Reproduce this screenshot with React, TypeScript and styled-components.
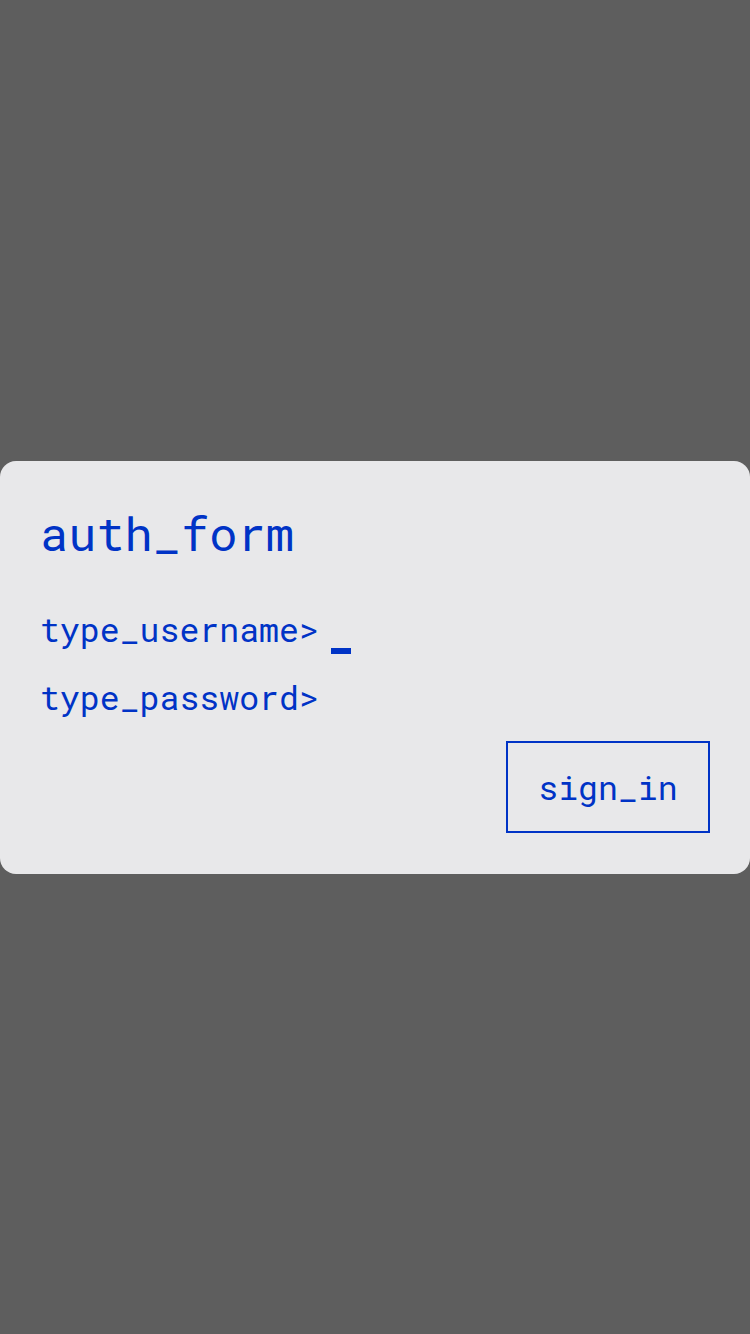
import React from "react"
import styled, { createGlobalStyle } from "styled-components"

const Blue = "#0033c6"

const GlobalStyle = createGlobalStyle`
  html, body {
    margin: 0;
    padding: 0;
    background: #5e5e5e;
  }
  body {
    font-family: "Roboto Mono", "DejaVu Sans Mono", "Liberation Mono", monospace;
  }
`

export default function App() {
  return (
    <>
      <GlobalStyle />
      <S.Page>
        <S.Card>
          <S.Title>auth_form</S.Title>
          <S.Fields>
            <S.Field>
              <S.Label>type_username&gt;</S.Label>
              <S.Cursor />
            </S.Field>
            <S.Field last>
              <S.Label>type_password&gt;</S.Label>
            </S.Field>
          </S.Fields>
          <S.Actions>
            <S.Button type="button">sign_in</S.Button>
          </S.Actions>
        </S.Card>
      </S.Page>
    </>
  )
}

const S = {
  Page: styled.div`
    min-height: 100vh;
    display: flex;
    flex-direction: column;
    justify-content: center;
  `,
  Card: styled.div`
    background: #e8e8ea;
    border-radius: 16px;
    padding: 40px 40px 41px;
    display: flex;
    flex-direction: column;
    color: ${Blue};
  `,
  Title: styled.h1`
    margin: 0;
    font-size: 47px;
    font-weight: 400;
    line-height: 64px;
  `,
  Fields: styled.div`
    display: flex;
    flex-direction: column;
    margin-top: 44px;
  `,
  Field: styled.div<{ last?: boolean }>`
    display: flex;
    align-items: baseline;
    gap: 12px;
    height: ${({ last }) => (last ? "64px" : "68px")};
  `,
  Label: styled.span`
    font-size: 33.2px;
    line-height: 40px;
  `,
  Cursor: styled.span`
    display: inline-block;
    width: 20px;
    height: 6px;
    background: ${Blue};
    transform: translateY(12px);
  `,
  Actions: styled.div`
    display: flex;
    justify-content: flex-end;
  `,
  Button: styled.button`
    width: 204px;
    height: 92px;
    border: 2px solid ${Blue};
    background: transparent;
    color: ${Blue};
    font-family: inherit;
    font-size: 33.2px;
    padding: 0;
    border-radius: 0;
  `,
}
